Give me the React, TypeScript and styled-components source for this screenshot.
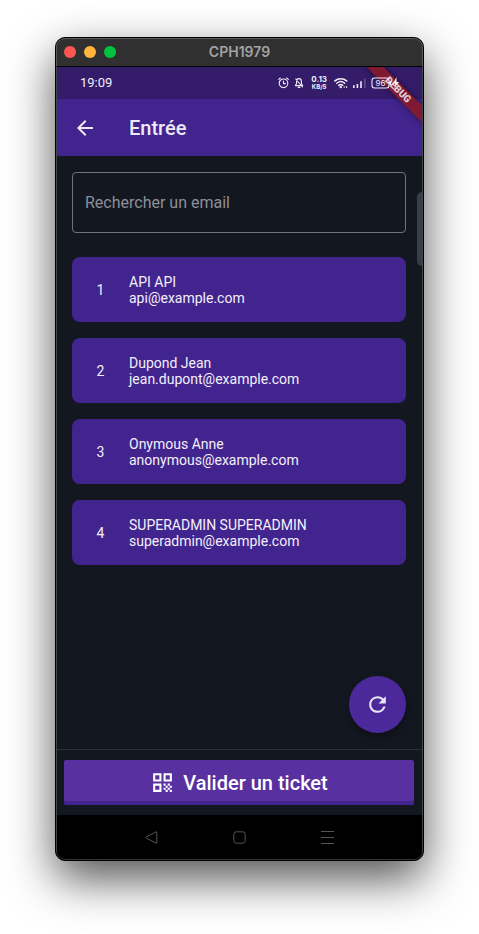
import React from "react";
import styled, { createGlobalStyle } from "styled-components";
import { MdArrowBack, MdQrCode, MdRefresh } from "react-icons/md";

const GlobalStyle = createGlobalStyle`
  *, *::before, *::after { box-sizing: border-box; }
  body { margin: 0; background: #fff; font-family: Roboto, sans-serif; }
  button, input { font: inherit; color: inherit; }
`;

const Desktop = styled.div`
  display: flex;
  min-height: 100vh;
  padding: 37px 55px 73px;
`;

const Window = styled.div`
  position: relative;
  display: flex;
  flex-direction: column;
  flex: 1;
  min-width: 0;
  overflow: hidden;
  background: #131720;
  border: 1px solid #000;
  border-radius: 10px;
  box-shadow: 0 18px 46px rgba(0, 0, 0, 0.68);

  &::after {
    content: "";
    position: absolute;
    inset: 0;
    border: 1px solid rgba(255, 255, 255, 0.2);
    border-radius: 9px;
    pointer-events: none;
  }
`;

const TitleBar = styled.header`
  display: grid;
  grid-template-columns: 1fr auto 1fr;
  align-items: center;
  height: 29px;
  padding: 0 8px;
  background: #303030;
  border-bottom: 1px solid #000;
`;

const Lights = styled.div`
  display: flex;
  gap: 8px;
`;

const Light = styled.span<{ $color: string }>`
  width: 12px;
  height: 12px;
  border-radius: 50%;
  background: ${(p) => p.$color};
`;

const WindowTitle = styled.span`
  font: 600 14px/16px Inter, sans-serif;
  color: #a3a3a3;
`;

const Screen = styled.div`
  position: relative;
  display: flex;
  flex-direction: column;
  flex: 1;
  margin: 0 1px;
  overflow: hidden;
`;

const StatusBar = styled.div`
  display: flex;
  align-items: center;
  justify-content: space-between;
  height: 32px;
  padding: 0 22px 0 23px;
  background: #341c6b;
  color: #f1eef6;
`;

const Clock = styled.time`
  font-size: 13px;
  line-height: 16px;
`;

const StatusIcons = styled.div`
  position: relative;
  z-index: 1;
  display: flex;
  align-items: center;
  gap: 5px;

  svg { display: block; }
`;

const NetSpeed = styled.span`
  display: flex;
  flex-direction: column;
  align-items: center;
  margin: 0 2px;
  font: 700 8px/7px Inter, sans-serif;
`;

const NetUnit = styled.span`
  font-size: 6px;
`;

const DebugBanner = styled.div`
  position: absolute;
  top: 17px;
  right: -16px;
  width: 80px;
  height: 12px;
  background: rgba(135, 25, 42, 0.9);
  box-shadow: 0 0 6px rgba(0, 0, 0, 0.5);
  color: #e0d0da;
  font-size: 10px;
  font-weight: 900;
  line-height: 12px;
  text-align: center;
  transform: rotate(45deg);
  pointer-events: none;
`;

const AppBar = styled.div`
  display: flex;
  align-items: center;
  gap: 32px;
  height: 57px;
  padding: 0 16px;
  background: #42248f;
  color: #ece9f4;
`;

const IconButton = styled.button`
  display: flex;
  padding: 0;
  border: 0;
  background: none;
  cursor: pointer;
`;

const PageTitle = styled.h1`
  margin: 0;
  font-size: 20px;
  font-weight: 500;
  line-height: 24px;
`;

const Content = styled.main`
  position: relative;
  display: flex;
  flex-direction: column;
  flex: 1;
  gap: 24px;
  padding: 16px 16px 16px 15px;
`;

const SearchInput = styled.input`
  width: 100%;
  height: 61px;
  padding: 0 12px;
  border: 1px solid #6f727b;
  border-radius: 4px;
  background: transparent;
  font-size: 16px;
  color: #fff;

  &::placeholder { color: #8d9098; opacity: 1; }
`;

const List = styled.ul`
  display: flex;
  flex-direction: column;
  gap: 16px;
  margin: 0;
  padding: 0;
  list-style: none;
`;

const Card = styled.li`
  display: grid;
  grid-template-columns: 57px 1fr;
  align-items: center;
  height: 65px;
  border-radius: 8px;
  background: #42248f;
  color: #f3f0f8;
  font-size: 14px;
  line-height: 16px;
`;

const Rank = styled.span`
  text-align: center;
`;

const Person = styled.div`
  display: flex;
  flex-direction: column;
`;

const ScrollThumb = styled.div`
  position: absolute;
  top: 36px;
  right: 0;
  width: 5px;
  height: 74px;
  border-radius: 5px 0 0 5px;
  background: #3a3d48;
`;

const RefreshButton = styled.button`
  display: flex;
  align-items: center;
  justify-content: center;
  align-self: flex-end;
  width: 57px;
  height: 57px;
  margin-top: auto;
  padding: 0;
  border: 0;
  border-radius: 50%;
  background: #4c299a;
  color: #e9e5f2;
  box-shadow: 0 4px 8px rgba(0, 0, 0, 0.35);
  cursor: pointer;
`;

const Footer = styled.footer`
  padding: 10px 8px 10px 7px;
  border-top: 1px solid #2d313b;
`;

const ValidateButton = styled.button`
  display: flex;
  align-items: center;
  justify-content: center;
  gap: 8px;
  width: 100%;
  height: 45px;
  padding: 0;
  border: 0;
  border-radius: 2px;
  background: #5830a0;
  box-shadow: inset 0 -4px #42248f;
  color: #fff;
  font-size: 20px;
  font-weight: 500;
  cursor: pointer;
`;

const NavBar = styled.nav`
  display: grid;
  grid-template-columns: repeat(3, 88px);
  justify-content: center;
  height: 45px;
  background: #000;
  color: #555;
`;

const NavButton = styled.button`
  display: flex;
  align-items: center;
  justify-content: center;
  padding: 0;
  border: 0;
  background: none;
  cursor: pointer;
`;

const AlarmIcon = () => (
  <svg width="11" height="12" viewBox="0 0 11 12" fill="none" stroke="currentColor" strokeWidth="1.1" strokeLinecap="round">
    <circle cx="5.5" cy="6.3" r="4.3" />
    <path d="M5.5 4v2.6h1.9M.7 2.4 2.3 1M10.3 2.4 8.7 1" />
  </svg>
);

const BellOffIcon = () => (
  <svg width="10" height="12" viewBox="0 0 10 12" fill="none" stroke="currentColor" strokeWidth="1.1" strokeLinecap="round" strokeLinejoin="round">
    <path d="M5 1.6C3.4 1.6 2.6 2.9 2.6 4.4v2L1.4 8.6h7.2L7.4 6.4v-2C7.4 2.9 6.6 1.6 5 1.6ZM4.2 10.4h1.6M1.8 2l6.6 8" />
  </svg>
);

const WifiIcon = () => (
  <svg width="14" height="12" viewBox="0 0 14 12" fill="none" stroke="currentColor" strokeWidth="1.5" strokeLinecap="round">
    <path d="M.9 3.9c3.3-3 8.4-3 11.8 0M2.8 6.2c2.3-2 5.5-2 7.8 0M4.7 8.3c1.2-.9 2.8-.9 4 0" />
    <circle cx="6.7" cy="10" r=".5" fill="currentColor" />
    <path d="M10.2 9.7v.8M12.6 9.4v1.1" strokeWidth="1" />
  </svg>
);

const SignalIcon = () => (
  <svg width="13" height="12" viewBox="0 0 13 12" fill="currentColor">
    <path d="M0 8.3h1.6V11H0zM3.6 7h1.6v4H3.6zM7.2 4.3h1.6V11H7.2z" />
    <path d="M11 1.5h1.5V11H11z" opacity=".25" />
  </svg>
);

const BatteryIcon = () => (
  <svg width="29" height="12" viewBox="0 0 29 12">
    <rect x="1" y="1" width="17" height="10" rx="2.5" fill="none" stroke="currentColor" strokeWidth="1.1" />
    <text x="9.5" y="9" textAnchor="middle" fill="currentColor" fontFamily="Inter, sans-serif" fontSize="8">96</text>
    <path d="M19.4 4v4" stroke="currentColor" strokeWidth="1.3" />
    <path d="M25.5 0 22 6.4h2.3L23.4 11 28 4.9h-2.5Z" fill="currentColor" />
  </svg>
);

const BackIcon = () => (
  <svg width="13" height="13" viewBox="0 0 13 13" fill="none" stroke="currentColor" strokeLinejoin="round">
    <path d="M11.8.9v11.2a.8.8 0 0 1-.8 0L1 7a.5.5 0 0 1 0-.9L11 .9a.8.8 0 0 1 .8 0Z" />
  </svg>
);

const HomeIcon = () => (
  <svg width="13" height="13" viewBox="0 0 13 13" fill="none" stroke="currentColor">
    <rect x=".8" y=".8" width="11.4" height="11.4" rx="2.5" />
  </svg>
);

const MenuIcon = () => (
  <svg width="13" height="13" viewBox="0 0 13 13" fill="none" stroke="currentColor">
    <path d="M0 .5h13M0 6.5h13M0 12.5h13" />
  </svg>
);

const people = [
  { name: "API API", email: "api@example.com" },
  { name: "Dupond Jean", email: "jean.dupont@example.com" },
  { name: "Onymous Anne", email: "anonymous@example.com" },
  { name: "SUPERADMIN SUPERADMIN", email: "superadmin@example.com" },
];

export default function App() {
  return (
    <>
      <GlobalStyle />
      <Desktop>
        <Window>
          <TitleBar>
            <Lights>
              <Light $color="#ff5650" />
              <Light $color="#ffb43c" />
              <Light $color="#00c441" />
            </Lights>
            <WindowTitle>CPH1979</WindowTitle>
          </TitleBar>
          <Screen>
            <StatusBar>
              <Clock>19:09</Clock>
              <StatusIcons>
                <AlarmIcon />
                <BellOffIcon />
                <NetSpeed>
                  0.13
                  <NetUnit>KB/S</NetUnit>
                </NetSpeed>
                <WifiIcon />
                <SignalIcon />
                <BatteryIcon />
              </StatusIcons>
            </StatusBar>
            <AppBar>
              <IconButton aria-label="Retour">
                <MdArrowBack size={24} />
              </IconButton>
              <PageTitle>Entrée</PageTitle>
            </AppBar>
            <Content>
              <SearchInput type="email" aria-label="Rechercher un email" placeholder="Rechercher un email" />
              <List>
                {people.map((p, i) => (
                  <Card key={p.email}>
                    <Rank>{i + 1}</Rank>
                    <Person>
                      <span>{p.name}</span>
                      <span>{p.email}</span>
                    </Person>
                  </Card>
                ))}
              </List>
              <RefreshButton aria-label="Actualiser">
                <MdRefresh size={25} />
              </RefreshButton>
              <ScrollThumb />
            </Content>
            <Footer>
              <ValidateButton>
                <MdQrCode size={25} />
                Valider un ticket
              </ValidateButton>
            </Footer>
            <NavBar>
              <NavButton aria-label="Précédent"><BackIcon /></NavButton>
              <NavButton aria-label="Accueil"><HomeIcon /></NavButton>
              <NavButton aria-label="Menu"><MenuIcon /></NavButton>
            </NavBar>
            <DebugBanner>DEBUG</DebugBanner>
          </Screen>
        </Window>
      </Desktop>
    </>
  );
}
